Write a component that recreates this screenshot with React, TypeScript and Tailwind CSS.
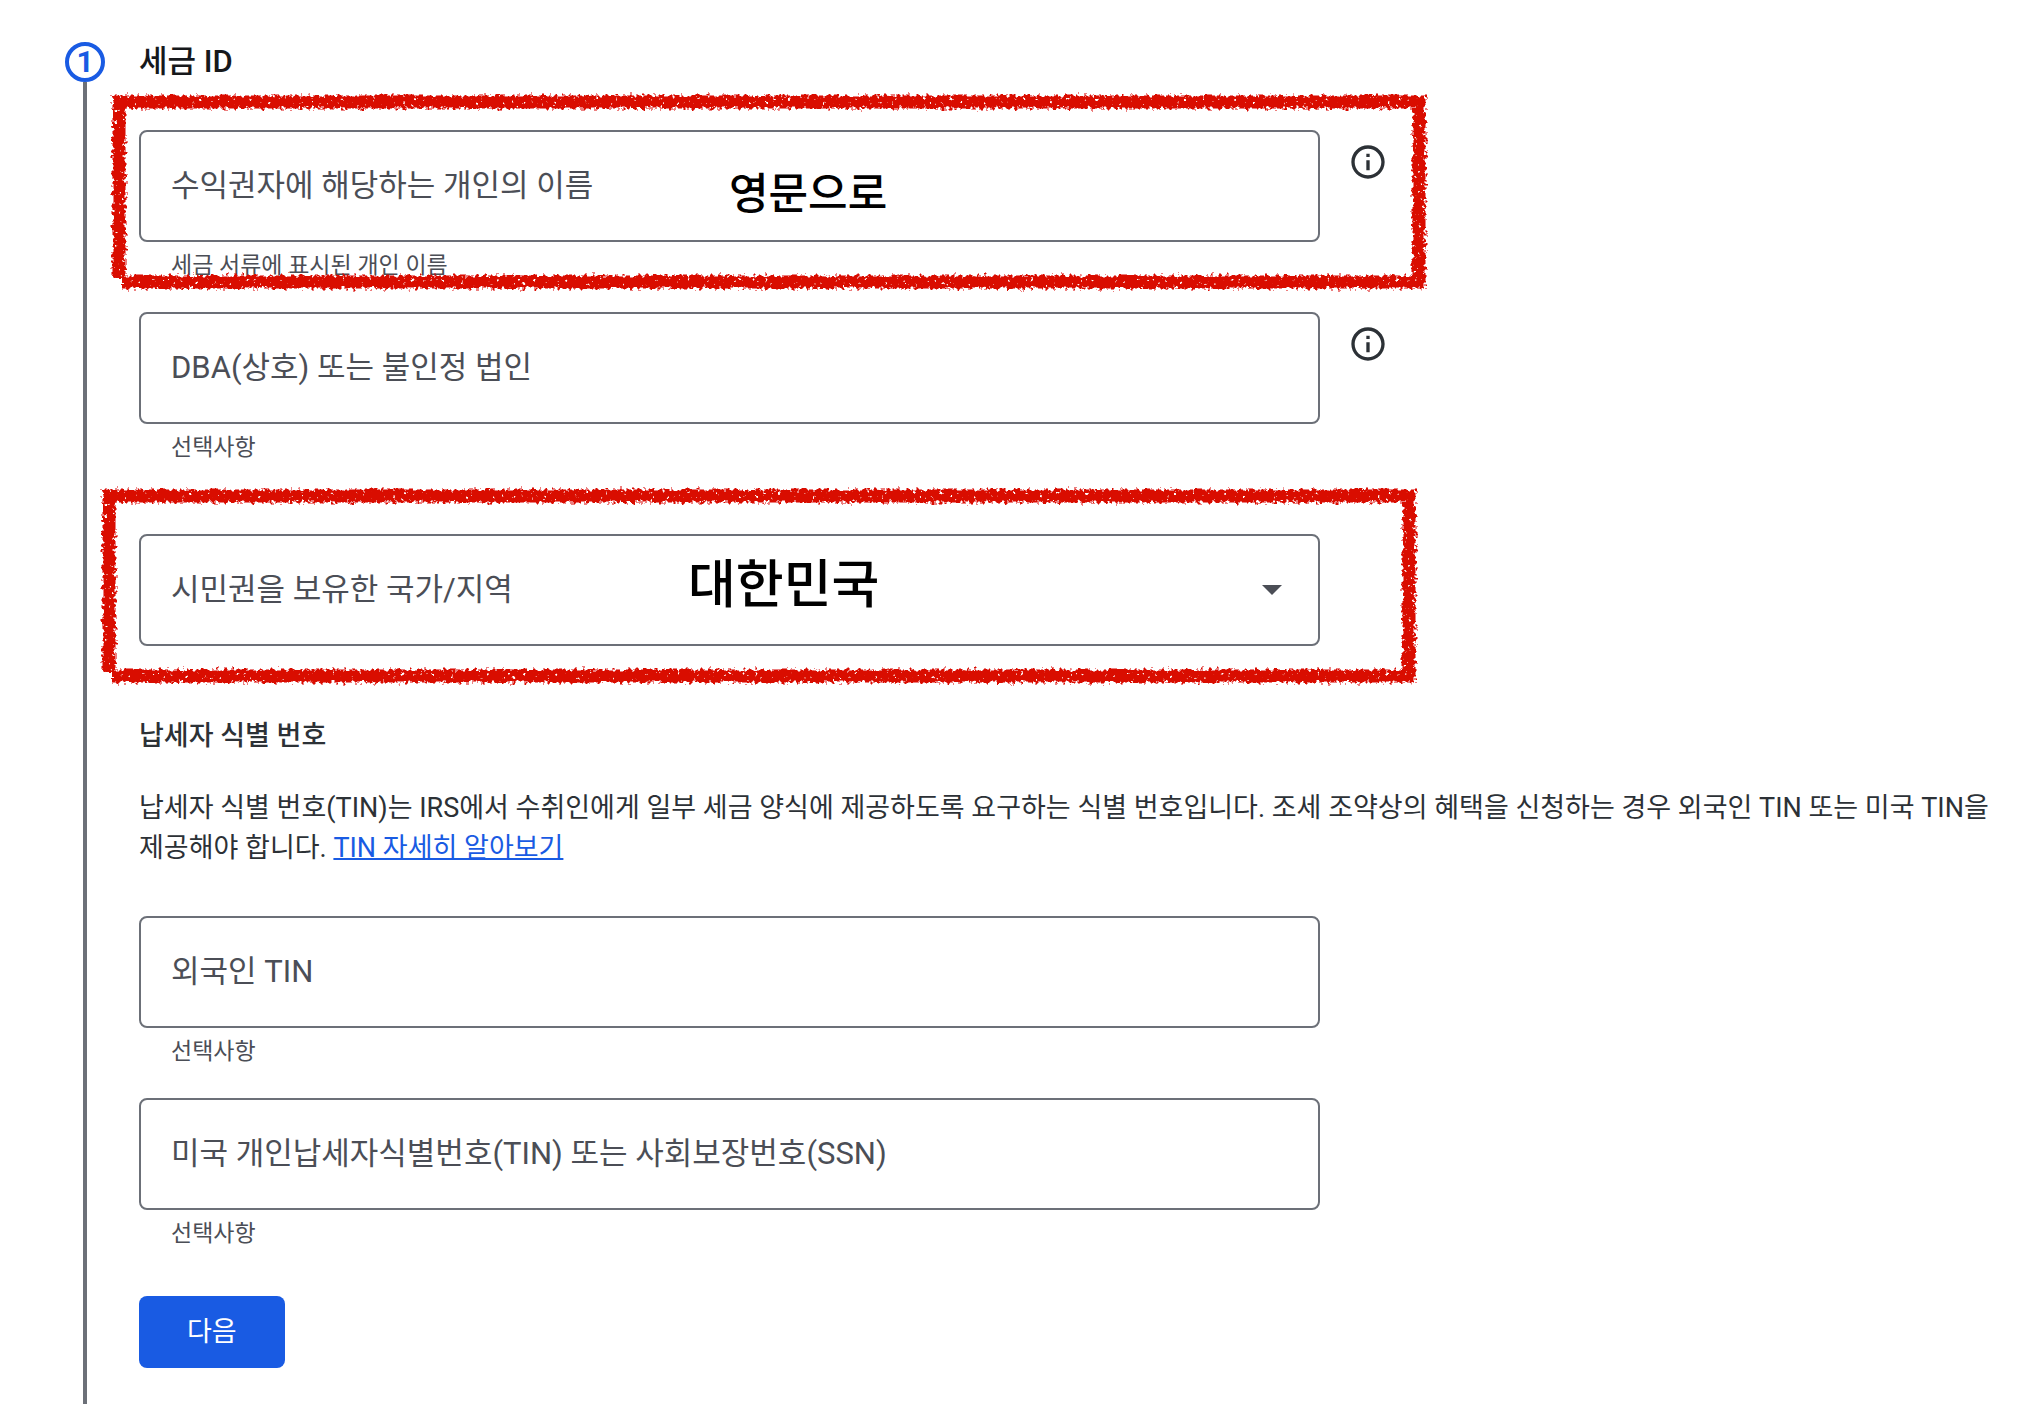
import type { ReactNode } from "react";

function InfoButton({ label }: { label: string }) {
  return (
    <button type="button" aria-label={label} className="mt-3 ml-7 size-10 shrink-0 text-[#2c3136]">
      <svg viewBox="0 0 24 24" className="size-10" fill="currentColor" aria-hidden="true">
        <path d="M11 7h2v2h-2zm0 4h2v6h-2zm1-9C6.48 2 2 6.48 2 12s4.48 10 10 10 10-4.48 10-10S17.52 2 12 2m0 18c-4.41 0-8-3.59-8-8s3.59-8 8-8 8 3.59 8 8-3.59 8-8 8" />
      </svg>
    </button>
  );
}

/* Rough crayon rectangle drawn around a field. */
function CrayonFrame({ id, className }: { id: string; className: string }) {
  return (
    <svg
      width="1324"
      height="204"
      viewBox="0 0 1324 204"
      fill="none"
      aria-hidden="true"
      className={`pointer-events-none absolute max-w-none ${className}`}
    >
      <filter id={id} filterUnits="userSpaceOnUse" x="0" y="0" width="1324" height="204">
        <feTurbulence type="fractalNoise" baseFrequency="0.26" numOctaves="2" seed="7" result="noise" />
        <feDisplacementMap in="SourceGraphic" in2="noise" scale="9" xChannelSelector="R" yChannelSelector="G" result="rough" />
        <feColorMatrix in="noise" type="matrix" values="0 0 0 0 0  0 0 0 0 0  0 0 0 0 0  0 0 10 0 -2.1" result="grain" />
        <feComposite in="rough" in2="grain" operator="in" />
      </filter>
      <g filter={`url(#${id})`} stroke="#d90d02" strokeWidth="13">
        <path d="M6 12H1318M12 6V188M15 192H1318M1312 8V198" />
      </g>
    </svg>
  );
}

function Note({ className, children }: { className: string; children: ReactNode }) {
  return (
    <span className={`pointer-events-none absolute font-medium whitespace-nowrap text-black ${className}`}>
      {children}
    </span>
  );
}

const box =
  "peer block h-28 w-full rounded-lg border-2 border-[#6c7078] bg-white px-[30px] pt-5 text-[31px] text-[#2c3136] outline-none focus:border-[#195be3]";

const floatingLabel = "pointer-events-none absolute left-8 text-[#4b4e56]";

function TextField({
  id,
  label,
  helper,
  info,
  children,
}: {
  id: string;
  label: string;
  helper: string;
  info?: boolean;
  children?: ReactNode;
}) {
  return (
    <div className="flex items-start">
      <div className="relative w-full max-w-[1181px]">
        <input id={id} type="text" placeholder=" " aria-describedby={`${id}-help`} className={box} />
        <label
          htmlFor={id}
          className={`${floatingLabel} top-2 text-[23px] leading-8 peer-placeholder-shown:top-8 peer-placeholder-shown:text-[31px] peer-placeholder-shown:leading-[48px]`}
        >
          {label}
        </label>
        <p id={`${id}-help`} className="h-[70px] px-8 pt-2 text-[23px] leading-8 text-[#4b4e56]">
          {helper}
        </p>
        {children}
      </div>
      {info && <InfoButton label={`${label} 정보`} />}
    </div>
  );
}

export default function App() {
  return (
    <main className="flex min-h-screen gap-[34px] overflow-x-hidden bg-white pt-[42px] pr-4 pl-[65px] font-[Roboto,'Noto_Sans_CJK_KR',sans-serif] break-keep text-[#2c3136]">
      <div className="flex w-10 shrink-0 flex-col items-center">
        <span className="flex size-10 items-center justify-center rounded-full border-4 border-[#195be3] text-[30px] leading-8 font-bold text-[#195be3]">
          1
        </span>
        <span className="w-1 flex-1 bg-[#6c7078]" />
      </div>

      <form className="min-w-0 flex-1" onSubmit={(e) => e.preventDefault()}>
        <h1 className="mb-12 text-[31px] leading-10 font-medium text-[#16181b]">세금 ID</h1>

        <TextField id="name" label="수익권자에 해당하는 개인의 이름" helper="세금 서류에 표시된 개인 이름" info>
          <CrayonFrame id="crayon-name" className="-top-10 -left-8" />
          <Note className="top-9 left-[590px] text-[43px] leading-[56px]">영문으로</Note>
        </TextField>

        <TextField id="dba" label="DBA(상호) 또는 불인정 법인" helper="선택사항" info />

        <div className="relative mt-10 w-full max-w-[1181px]">
          <select id="country" defaultValue="" required className={`${box} appearance-none`}>
            <option value="" aria-label="선택 안함" />
            <option value="kr">대한민국</option>
          </select>
          <label
            htmlFor="country"
            className={`${floatingLabel} top-2 text-[23px] leading-8 peer-invalid:top-8 peer-invalid:text-[31px] peer-invalid:leading-[48px]`}
          >
            시민권을 보유한 국가/지역
          </label>
          <svg
            viewBox="0 0 20 10"
            className="pointer-events-none absolute top-[51px] right-[38px] h-2.5 w-5 fill-[#4b4e56]"
            aria-hidden="true"
          >
            <path d="M0 0h20L10 10z" />
          </svg>
          <CrayonFrame id="crayon-country" className="-top-[50px] -left-[42px]" />
          <Note className="top-4 left-[549px] text-[52px] leading-[72px]">대한민국</Note>
        </div>

        <h2 className="mt-[70px] text-[27px] leading-10 font-medium">납세자 식별 번호</h2>
        <p className="mt-8 mb-12 text-[27px] leading-10">
          납세자 식별 번호(TIN)는 IRS에서 수취인에게 일부 세금 양식에 제공하도록 요구하는 식별 번호입니다. 조세
          조약상의 혜택을 신청하는 경우 외국인 TIN 또는 미국 TIN을 제공해야 합니다.{" "}
          <a href="#tin" className="text-[#195be3] underline decoration-2">
            TIN 자세히 알아보기
          </a>
        </p>

        <TextField id="foreign-tin" label="외국인 TIN" helper="선택사항" />
        <TextField id="us-tin" label="미국 개인납세자식별번호(TIN) 또는 사회보장번호(SSN)" helper="선택사항" />

        <button type="submit" className="mt-4 h-[72px] rounded-lg bg-[#195be3] px-12 text-[27px] text-white">
          다음
        </button>
      </form>
    </main>
  );
}
